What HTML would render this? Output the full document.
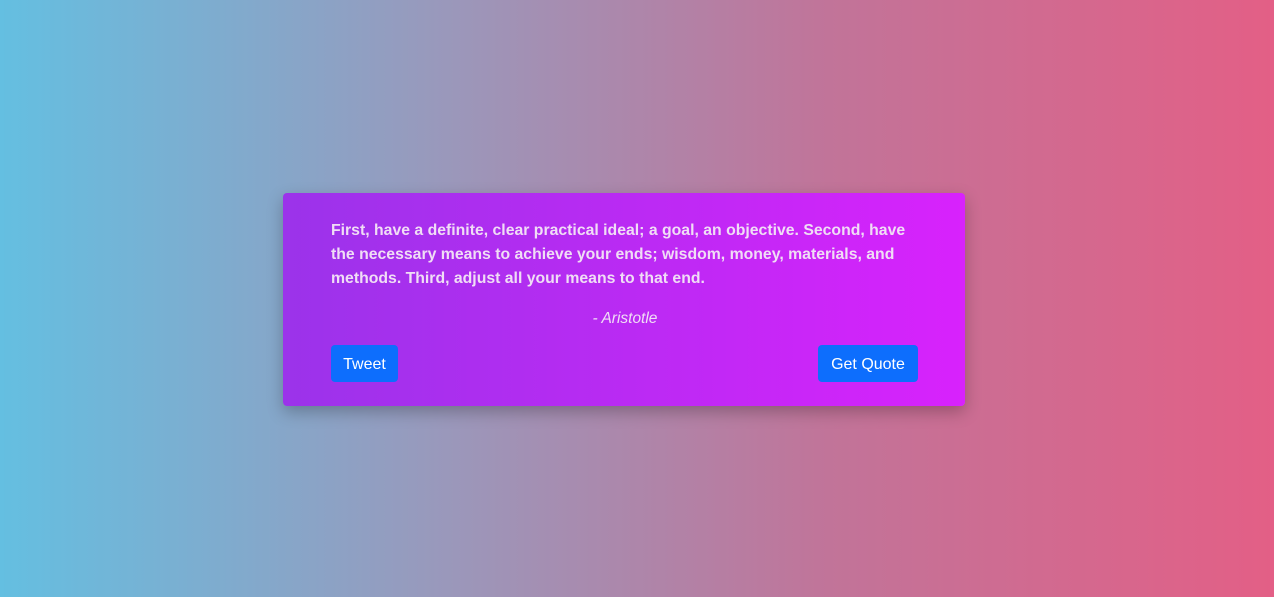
<!DOCTYPE html>
<html><head><style>
html,body{margin:0;padding:0}
body{width:1274px;height:597px;background:linear-gradient(90deg,#64bfe1 0%,#9a98bb 35%,#c17499 65%,#e35f86 100%);font-family:"Liberation Sans",sans-serif;position:relative;overflow:hidden}
.card{position:absolute;left:283px;top:193px;width:682px;height:213px;border-radius:4px;background:linear-gradient(90deg,#9b33ea,#d822fc);box-shadow:0 6px 16px rgba(0,0,0,0.25)}
.q{position:absolute;left:48px;top:26px;width:600px;font-weight:bold;font-size:15.8px;line-height:24px;color:#f0ddf5;white-space:nowrap;letter-spacing:0}
.a{position:absolute;left:0;width:682px;top:117px;text-align:center;font-style:italic;font-size:15.5px;color:#f0ddf5;padding-left:1px}
.b{position:absolute;top:152px;height:37px;background:#0d6efd;color:#fff;border-radius:4px;font-size:16px;line-height:39px;text-align:center}
</style></head><body>
<div class="card">
<div class="q">First, have a definite, clear practical ideal; a goal, an objective. Second, have<br>the necessary means to achieve your ends; wisdom, money, materials, and<br>methods. Third, adjust all your means to that end.</div>
<div class="a">- Aristotle</div>
<div class="b" style="left:48px;width:67px">Tweet</div>
<div class="b" style="left:535px;width:100px">Get Quote</div>
</div>
</body></html>
